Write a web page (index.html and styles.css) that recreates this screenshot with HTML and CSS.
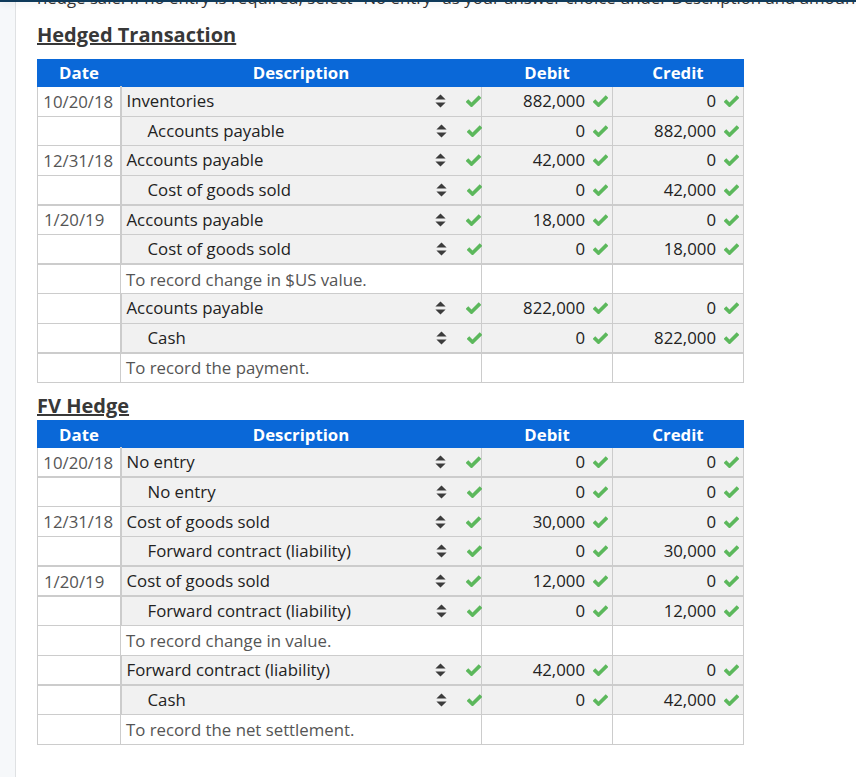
FILE: index.html
```html
<!DOCTYPE html>
<html lang="en">
<head>
<meta charset="utf-8">
<title>Hedged Transaction</title>
<link rel="stylesheet" href="styles.css">
</head>
<body>
<svg class="defs" width="0" height="0" aria-hidden="true">
  <symbol id="sort" viewBox="0 0 11 14"><path d="M5.5 0.5 10.6 5.6H0.4Z M0.4 8.4H10.6L5.5 13.5Z" fill="#3c3c3c"/></symbol>
  <symbol id="check" viewBox="0 0 15 12"><path d="M1 5.6 5.5 10 14 1.6" fill="none" stroke="#5cb85c" stroke-width="3.6"/></symbol>
</svg>
<div class="top-bar"></div>
<main class="page">
  <p class="cut">hedge sale. If no entry is required, select "No entry" as your answer choice under Description and amount.</p>
  <h2 class="title first">Hedged Transaction</h2>
  <table class="journal hedged">
    <thead><tr><th class="c-date">Date</th><th class="c-desc">Description</th><th class="c-num">Debit</th><th class="c-num">Credit</th></tr></thead>
    <tbody id="t1"></tbody>
  </table>
  <h2 class="title second">FV Hedge</h2>
  <table class="journal fv">
    <thead><tr><th class="c-date">Date</th><th class="c-desc">Description</th><th class="c-num">Debit</th><th class="c-num">Credit</th></tr></thead>
    <tbody id="t2"></tbody>
  </table>
</main>
<script src="app.js"></script>
</body>
</html>
```
FILE: styles.css
```css
* { box-sizing: border-box; }
html, body { margin: 0; height: 100%; }
body { background: #f6f8fa; font-family: "Open Sans", "Liberation Sans", sans-serif; color: #333; overflow: hidden; }
.defs { position: absolute; }
.top-bar { position: absolute; left: 0; right: 0; top: 0; height: 2px; background: #0f3a5a; box-shadow: 0 2px 6px rgba(0,0,0,.12); z-index: 2; }
.page { margin-left: 15px; height: 777px; background: #fff; border-left: 1px solid #dfe1e3; padding-left: 21px; overflow: hidden; }
.cut { margin: -14px 0 0; font-size: 16.8px; line-height: 23px; white-space: nowrap; }
.title { margin: 0; font-size: 20px; font-weight: 700; line-height: 28px; text-decoration: underline; color: #383838; }
.title.first { margin-top: 12px; margin-bottom: 10px; }
.title.second { margin-top: 9px; }
.journal { border-collapse: collapse; table-layout: fixed; width: 706px; font-size: 16.8px; color: #222; }
.journal th { background: #0a68d8; border: 1px solid #0a68d8; color: #fff; font-weight: 700; font-size: 16.8px; height: 27px; padding: 0; text-align: center; }
.journal.hedged th { padding-bottom: 2px; }
.journal.fv th { padding-top: 1px; }
.journal td { height: 29.6px; padding: 0; border: 1px solid #ccc; }
.journal.fv td { height: 29.7px; }
.c-date { width: 83px; }
.c-desc { width: 361px; }
.c-num { width: 131px; }
.journal td.date { text-align: center; color: #555; padding-right: 1px; border-right-width: 2px; }
.journal td.date.left { text-align: left; padding-left: 6px; }
.entry { background: #f1f1f1; }
.journal tr.thick td { border-bottom-width: 2px; }
.cell { display: flex; align-items: center; height: 26px; line-height: 26px; }
.desc { padding-left: 5px; }
.desc.indent { padding-left: 26px; margin-right: -1px; }
.desc .name { flex: 1; }
.sort { width: 11px; height: 14px; margin-right: 20px; }
.check { width: 15px; height: 12px; flex: none; }
.num { justify-content: flex-end; padding-right: 4px; }
.num .check { margin-left: 8px; }
.journal td.note { color: #555; padding-left: 5px; }
.plain { background: #fff; }
```
FILE: app.js
```js
var t1 = [
  ["10/20/18","Inventories",0,"882,000","0"],
  ["","Accounts payable",1,"0","882,000"],
  ["12/31/18","Accounts payable",0,"42,000","0"],
  ["","Cost of goods sold",1,"0","42,000",1],
  ["1/20/19","Accounts payable",0,"18,000","0"],
  ["","Cost of goods sold",1,"0","18,000",1],
  ["note","To record change in $US value."],
  ["","Accounts payable",0,"822,000","0"],
  ["","Cash",1,"0","822,000",1],
  ["note","To record the payment."]
];
var t2 = [
  ["10/20/18","No entry",0,"0","0",1],
  ["","No entry",1,"0","0"],
  ["12/31/18","Cost of goods sold",0,"30,000","0"],
  ["","Forward contract (liability)",1,"0","30,000",1],
  ["1/20/19","Cost of goods sold",0,"12,000","0",1],
  ["","Forward contract (liability)",1,"0","12,000"],
  ["note","To record change in value."],
  ["","Forward contract (liability)",0,"42,000","0",1],
  ["","Cash",1,"0","42,000"],
  ["note","To record the net settlement."]
];
var CHECK = '<svg class="check"><use href="#check"/></svg>';
var SORT = '<svg class="sort"><use href="#sort"/></svg>';
function row(r) {
  if (r[0] === "note") {
    return '<tr><td class="plain"></td><td class="note plain">' + r[1] + '</td><td class="plain"></td><td class="plain"></td></tr>';
  }
  var dateCls = r[0].length === 7 ? "date left" : "date";
  return '<tr' + (r[5] ? ' class="thick"' : '') + '><td class="' + dateCls + '">' + r[0] + '</td>' +
    '<td class="entry"><div class="cell desc' + (r[2] ? ' indent' : '') + '"><span class="name">' + r[1] + '</span>' + SORT + CHECK + '</div></td>' +
    '<td class="entry"><div class="cell num">' + r[3] + CHECK + '</div></td>' +
    '<td class="entry"><div class="cell num">' + r[4] + CHECK + '</div></td></tr>';
}
document.getElementById("t1").innerHTML = t1.map(row).join("");
document.getElementById("t2").innerHTML = t2.map(row).join("");
```
